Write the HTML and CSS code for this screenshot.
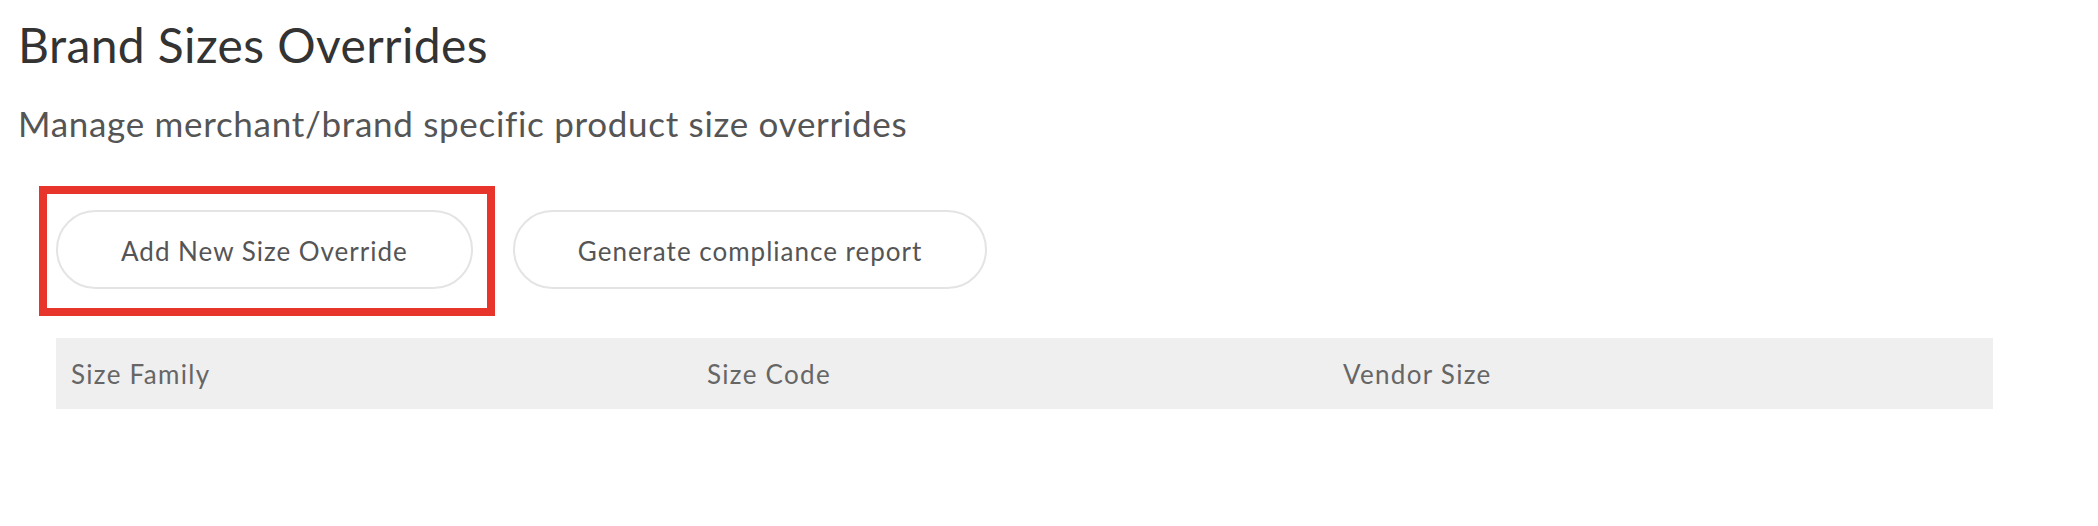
FILE: index.html
```html
<!DOCTYPE html>
<html lang="en">
<head>
<meta charset="utf-8">
<title>Brand Sizes Overrides</title>
<link rel="stylesheet" href="styles.css">
</head>
<body>
<main class="page">
  <h1 class="title">Brand Sizes Overrides</h1>
  <p class="subtitle">Manage merchant/brand specific product size overrides</p>
  <div class="actions">
    <div class="highlight-wrap">
      <button class="btn" type="button">Add New Size Override</button>
      <span class="highlight" aria-hidden="true"></span>
    </div>
    <button class="btn" type="button">Generate compliance report</button>
  </div>
  <div class="table">
    <div class="table-head">
      <div class="th">Size Family</div>
      <div class="th">Size Code</div>
      <div class="th">Vendor Size</div>
      <div class="th"></div>
    </div>
  </div>
</main>
</body>
</html>
```

FILE: styles.css
```css
* { box-sizing: border-box; }
html, body { margin: 0; padding: 0; background: #ffffff; }
body {
  font-family: Lato, "Open Sans", "Liberation Sans", sans-serif;
  color: #333333;
}
.page {
  padding: 16px 0 0 18px;
}
.title {
  margin: 0;
  font-size: 48px;
  font-weight: 400;
  line-height: 58px;
  letter-spacing: 0.4px;
  color: #333333;
}
.subtitle {
  margin: 29px 0 0 0;
  font-size: 35px;
  font-weight: 400;
  line-height: 40px;
  letter-spacing: 0.7px;
  color: #555555;
}
.actions {
  display: flex;
  gap: 40px;
  margin: 67px 0 0 38px;
}
.highlight-wrap {
  position: relative;
  display: flex;
}
.highlight {
  position: absolute;
  top: -24px;
  left: -17px;
  right: -22px;
  bottom: -27px;
  border: 8px solid #e8352b;
  pointer-events: none;
}
.btn {
  height: 79px;
  padding: 3px 63px 0 63px;
  border: 2px solid #e4e4e4;
  border-radius: 40px;
  background: #ffffff;
  font-family: Lato, "Open Sans", "Liberation Sans", sans-serif;
  font-size: 26px;
  letter-spacing: 1px;
  color: #555555;
  cursor: pointer;
}
.table {
  margin: 49px 0 0 38px;
  width: 1937px;
}
.table-head {
  display: grid;
  grid-template-columns: 636px 636px 636px 1fr;
  height: 71px;
  align-items: center;
  background: #efefef;
  padding-left: 15px;
}
.th {
  font-size: 26px;
  letter-spacing: 1.3px;
  color: #666666;
}
```
